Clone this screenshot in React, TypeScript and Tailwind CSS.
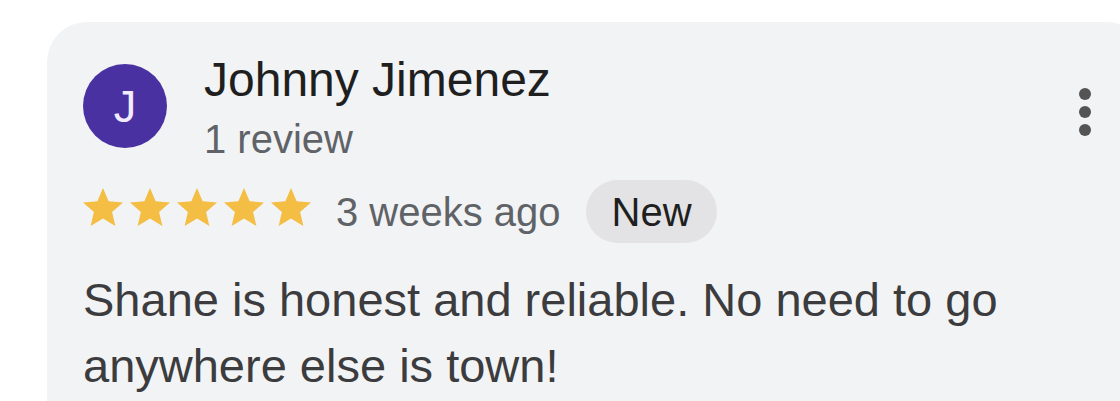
import React from "react";

const Star = () => (
  <svg width="40" height="38" viewBox="2 2 20 19" className="block">
    <path
      d="M12 17.27L18.18 21l-1.64-7.03L22 9.24l-7.19-.61L12 2 9.19 8.63 2 9.24l5.46 4.73L5.82 21z"
      fill="#f4bd43"
    />
  </svg>
);

export default function App() {
  return (
    <div
      className="w-[1120px] h-[401px] overflow-hidden bg-white"
      style={{ fontFamily: '"Liberation Sans", Arial, sans-serif' }}
    >
      <div className="ml-[47px] mt-[22px] w-[1100px] h-[440px] rounded-[40px] bg-[#f2f3f5] pl-[36px] pr-[50px] pt-[29px]">
        <div className="flex items-start">
          <div className="mt-[13px] w-[84px] h-[84px] shrink-0 rounded-full bg-[#4a31a2] flex items-center justify-center text-[45px] leading-none text-[#f3ecff]">
            J
          </div>
          <div className="ml-[37px] flex flex-col">
            <div className="text-[48px] leading-[58px] text-[#1f1f1f]">Johnny Jimenez</div>
            <div className="mt-[2px] text-[40px] leading-[56px] text-[#5f6368]">1 review</div>
          </div>
          <div className="ml-auto mt-[37px] w-[24px] flex flex-col items-center gap-[6px]">
            <span className="block w-[12px] h-[12px] rounded-full bg-[#545454]" />
            <span className="block w-[12px] h-[12px] rounded-full bg-[#545454]" />
            <span className="block w-[12px] h-[12px] rounded-full bg-[#545454]" />
          </div>
        </div>
        <div className="mt-[13px] flex items-center">
          <div className="flex gap-[7px] mb-[9px]">
            <Star />
            <Star />
            <Star />
            <Star />
            <Star />
          </div>
          <span className="ml-[25px] text-[40px] leading-none text-[#5f6368]">3 weeks ago</span>
          <span className="ml-[25px] h-[63px] rounded-full bg-[#e3e3e5] pl-[26px] pr-[25px] flex items-center text-[40px] leading-none font-medium text-[#1f1f1f]">
            New
          </span>
        </div>
        <p className="mt-[24px] w-[960px] text-[47px] leading-[66px] text-[#3c3c3e]">
          Shane is honest and reliable. No need to go anywhere else is town!
        </p>
      </div>
    </div>
  );
}
